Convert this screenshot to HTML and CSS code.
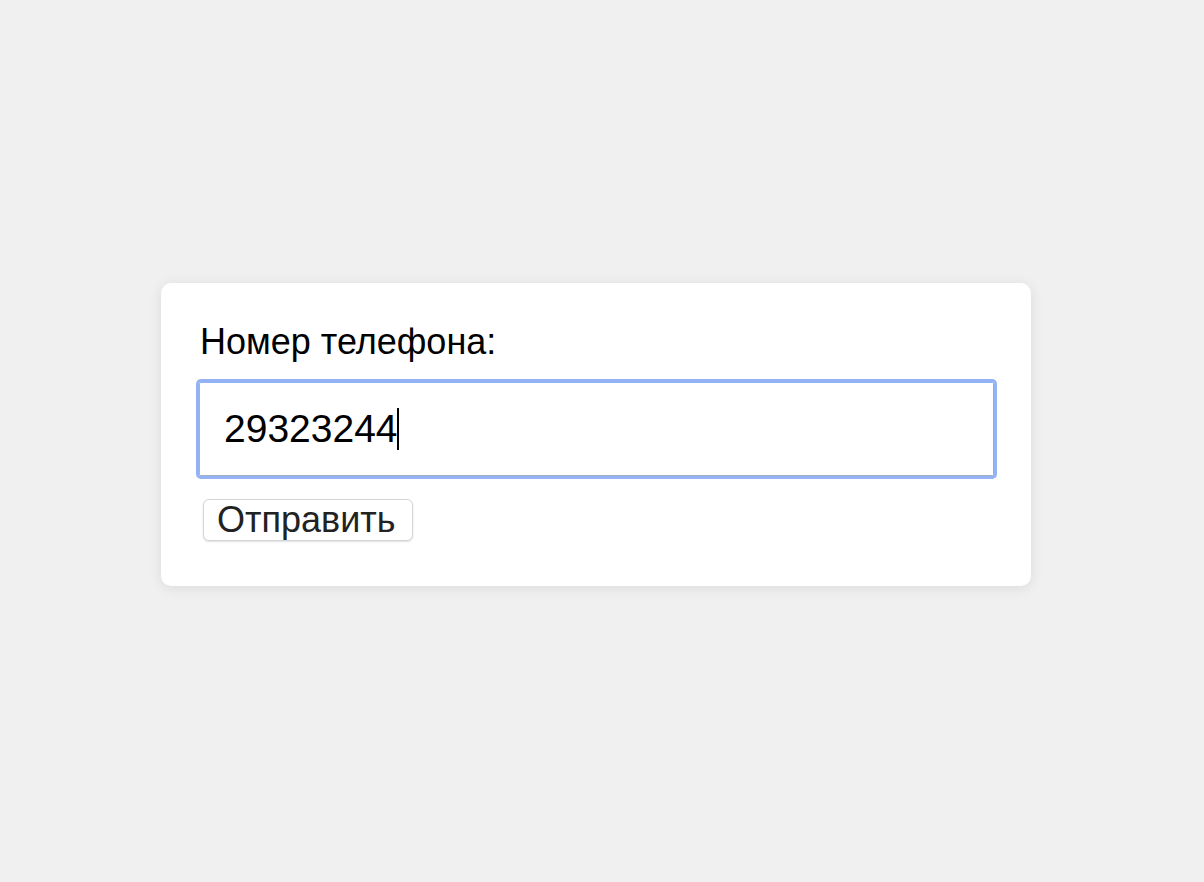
FILE: index.html
```html
<!DOCTYPE html>
<html lang="ru">
<head>
<meta charset="utf-8">
<title>Номер телефона</title>
<link rel="stylesheet" href="styles.css">
</head>
<body>
<main class="page">
  <form class="card">
    <label class="label" for="phone">Номер телефона:</label>
    <div class="field" id="phone" role="textbox"><span class="value">29323244</span><span class="caret"></span></div>
    <div class="actions">
      <button type="button" class="submit">Отправить</button>
    </div>
  </form>
</main>
</body>
</html>
```

FILE: styles.css
```css
html, body {
  margin: 0;
  padding: 0;
}
body {
  background: #f0f0f0;
  font-family: "Liberation Sans", Arial, Helvetica, sans-serif;
}
.page {
  display: flex;
  align-items: center;
  justify-content: center;
  height: 882px;
  padding: 0 12px 14px 0;
  box-sizing: border-box;
}
.card {
  width: 870px;
  box-sizing: border-box;
  background: #ffffff;
  border-radius: 10px;
  box-shadow: 0 2px 14px rgba(0, 0, 0, 0.09);
  padding: 38px 36px 45px 38px;
  display: flex;
  flex-direction: column;
}
.label {
  font-size: 36px;
  color: #000;
  line-height: 41px;
  padding-left: 1px;
}
.field {
  margin-top: 20px;
  width: 795px;
  height: 94px;
  box-sizing: border-box;
  border: 1px solid #94b3f4;
  border-right-color: #a3adc2;
  border-bottom-color: #a3adc2;
  border-radius: 2px;
  box-shadow: 0 0 0 3px #94b3f4;
  padding: 0 24px;
  display: flex;
  align-items: center;
  font-size: 39px;
  color: #000;
}
.caret {
  display: inline-block;
  width: 2px;
  height: 42px;
  background: #000;
  margin-left: -1px;
}
.actions {
  display: flex;
  margin-top: 23px;
}
.submit {
  margin-left: 4px;
  height: 42px;
  padding: 0 16px 0 13px;
  font-family: "Liberation Sans", Arial, Helvetica, sans-serif;
  font-size: 36px;
  color: #222;
  background: #fff;
  border: 1px solid #d4d4d4;
  border-radius: 6px;
  box-shadow: 0 1px 2px rgba(0, 0, 0, 0.12);
  line-height: 40px;
}
```
